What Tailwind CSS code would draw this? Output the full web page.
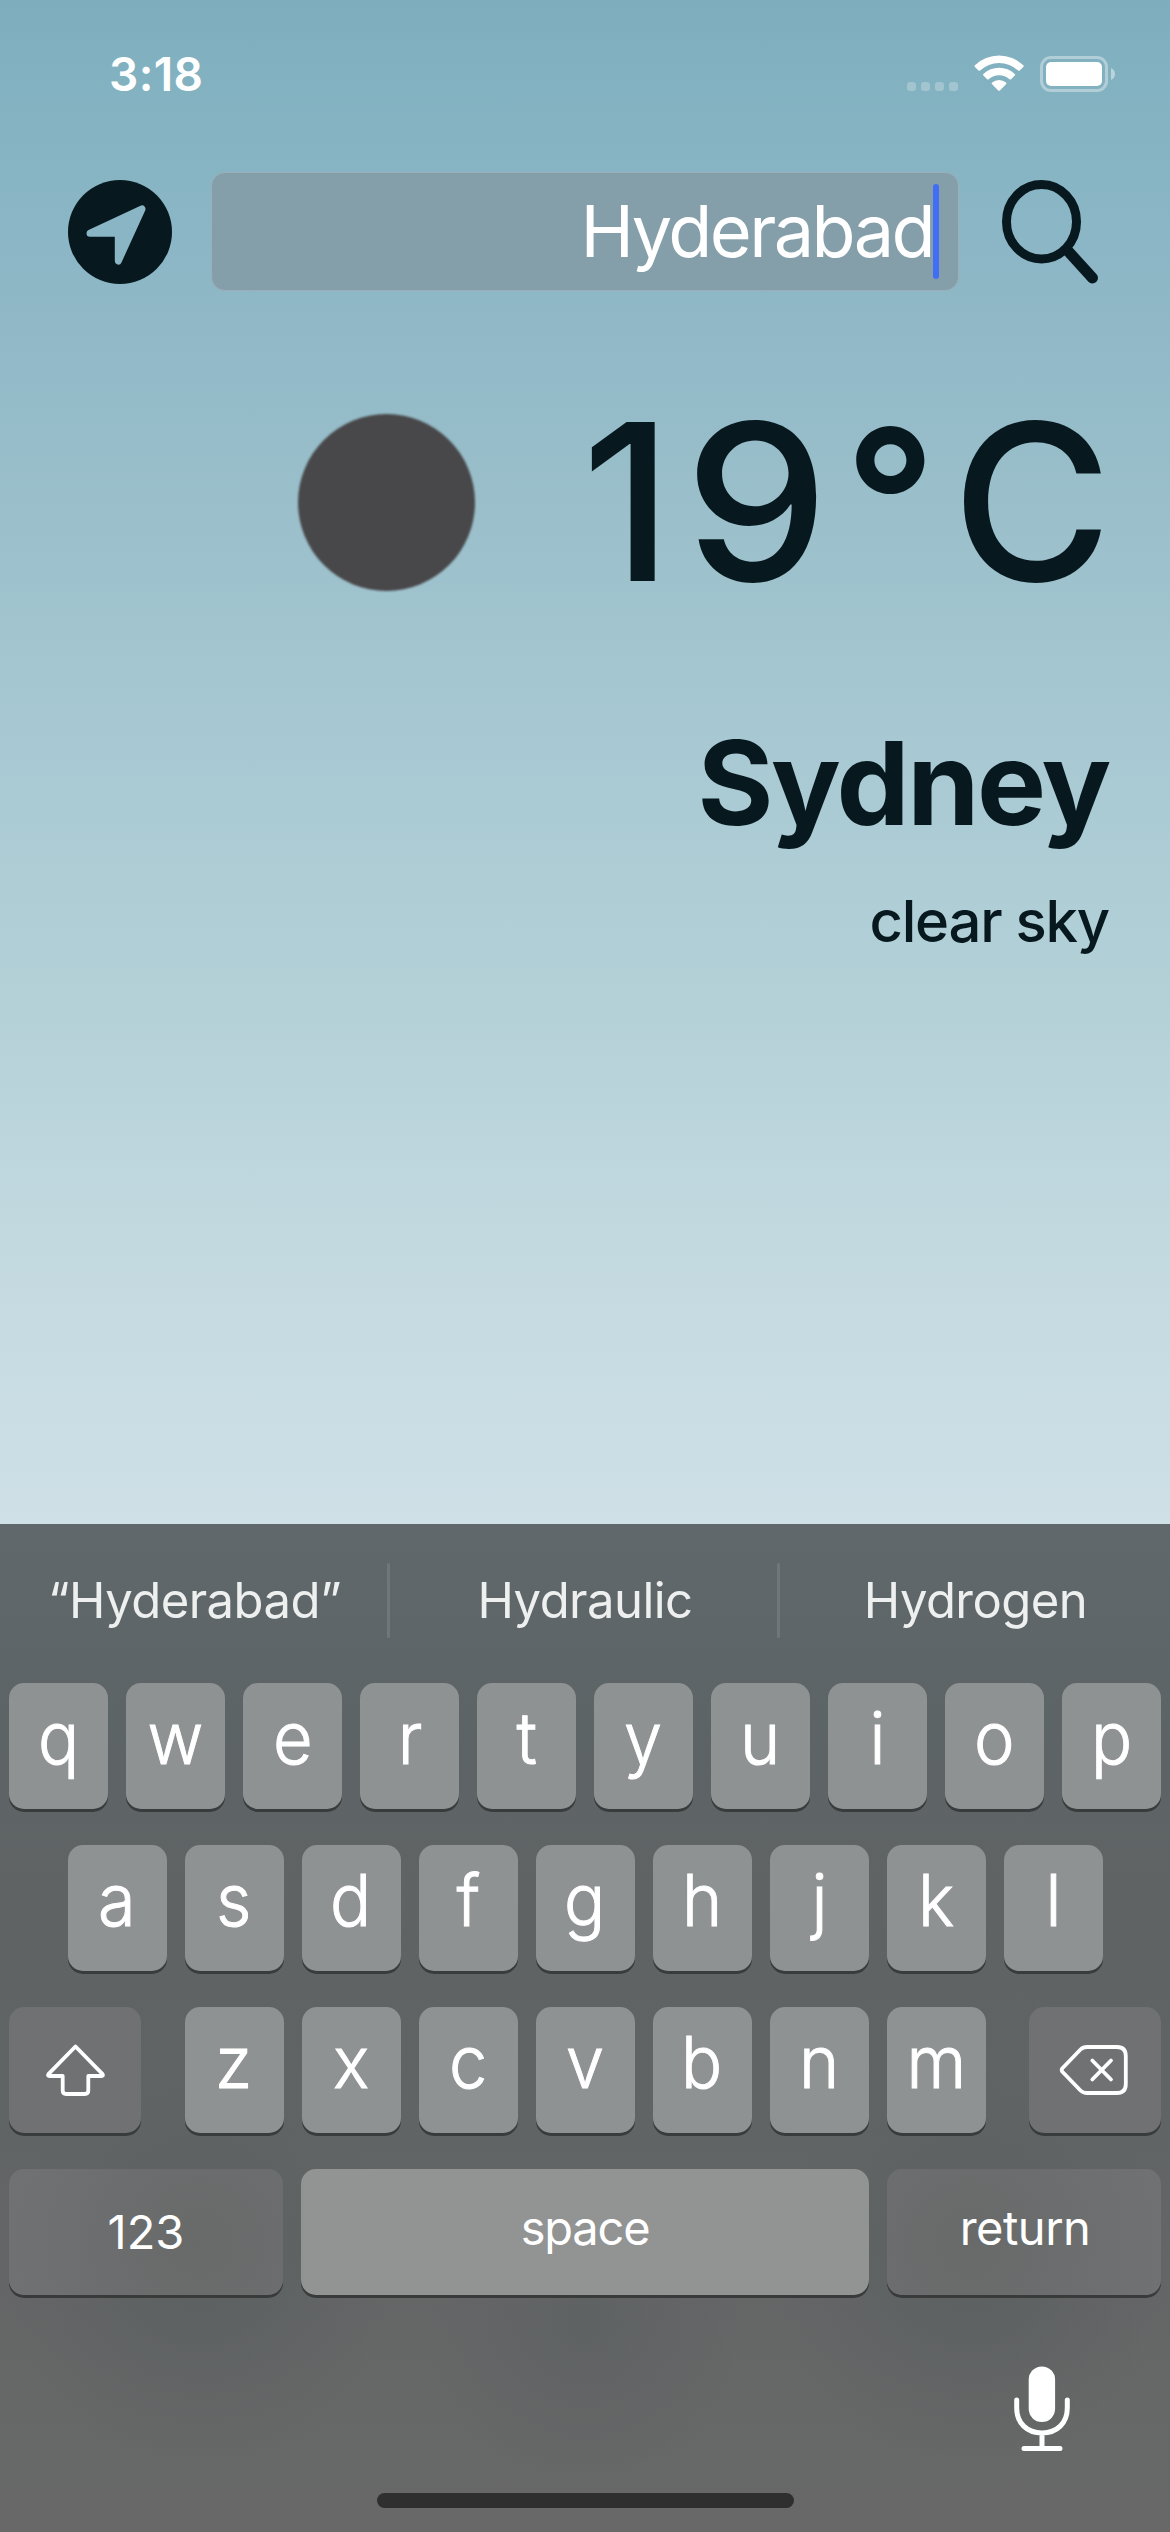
<!DOCTYPE html>
<html lang="en">
<head>
<meta charset="utf-8">
<title>Weather</title>
<script src="https://cdn.jsdelivr.net/npm/@tailwindcss/browser@4"></script>
</head>
<body class="h-[2532px] w-[1170px] overflow-hidden font-['Inter',sans-serif]">
<div class="flex h-[2532px] w-[1170px] flex-col bg-[linear-gradient(180deg,#7eaebe_0px,#86b4c3_150px,#90b8c7_320px,#9bc0cb_520px,#a8c9d3_750px,#b3d0d7_980px,#c3d9e0_1250px,#cfe0e7_1524px)]">

  <!-- Status bar -->
  <header class="flex h-[149px] shrink-0 justify-between pl-[109px] pr-[54px]">
    <div class="h-[149px] text-[46px] leading-[149px] font-semibold tracking-[0.4px] text-white">3:18</div>
    <div class="flex pt-[54px]">
      <div class="mt-[28px] flex h-[9px] gap-[5px]">
        <i class="size-[9px] rounded-[3px] bg-white/25"></i>
        <i class="size-[9px] rounded-[3px] bg-white/25"></i>
        <i class="size-[9px] rounded-[3px] bg-white/25"></i>
        <i class="size-[9px] rounded-[3px] bg-white/25"></i>
      </div>
      <svg class="ml-[16px] h-[38px] w-[50px]" viewBox="974 54 50 38" fill="#fff">
        <path d="M974.9 65.3a1.1 1.1 0 0 0 0 1.6l3.6 3.6a1.2 1.2 0 0 0 1.6 0a27.6 27.6 0 0 1 38 0a1.2 1.2 0 0 0 1.6 0l3.6-3.6a1.1 1.1 0 0 0 0-1.6a35 35 0 0 0-48.400 0Z"/>
        <path d="M983.4 73.900a1.100 1.100 0 0 0 0 1.600l3.700 3.700a1.200 1.200 0 0 0 1.600 0a15.400 15.400 0 0 1 20.800 0a1.200 1.200 0 0 0 1.600 0l3.700-3.700a1.100 1.100 0 0 0 0-1.600a22.900 22.900 0 0 0-31.400 0Z"/>
        <path d="M992.100 82.500a1.100 1.100 0 0 0 0 1.700l6.100 6.200a1.200 1.200 0 0 0 1.700 0l6.100-6.200a1.100 1.100 0 0 0 0-1.700a10.800 10.800 0 0 0-13.900 0Z"/>
      </svg>
      <svg class="ml-[16px] h-[38px] w-[76px]" viewBox="1040 54 76 38">
        <rect x="1041.500" y="57.500" width="65" height="33" rx="9.500" fill="none" stroke="#fff" stroke-opacity=".38" stroke-width="3"/>
        <rect x="1046" y="62" width="56" height="24" rx="5" fill="#fff"/>
        <path d="M1111 68v12c2.400-1 4-3.300 4-6s-1.600-5-4-6Z" fill="#fff" fill-opacity=".45"/>
      </svg>
    </div>
  </header>

  <!-- Search row -->
  <section class="flex h-[165px] shrink-0 items-center pt-0 pl-[68px]">
    <svg class="size-[104px] shrink-0" viewBox="68 180 104 104">
      <circle cx="120" cy="232" r="52" fill="#07181e"/>
      <path d="M90 233.200L142 209L118.300 261V236.500Q118.300 233.200 115 233.200Z" fill="#89b5c4" stroke="#89b5c4" stroke-width="7" stroke-linejoin="round"/>
    </svg>
    <div class="ml-[39px] flex h-[119px] w-[748px] items-center justify-end rounded-[14px] border border-[#9aafb8] bg-[#849faa] pr-[19px]">
      <span class="h-[119px] text-[72px] leading-[117px] font-normal tracking-[-2.6px] text-white">Hyderabad</span>
      <span class="h-[95px] w-[6px] rounded-[3px] bg-[#416ef5]"></span>
    </div>
    <svg class="ml-[42px] h-[104px] w-[98px]" viewBox="1001 180 98 104" fill="none" stroke="#07181e">
      <ellipse cx="1041.500" cy="221.700" rx="35" ry="37.200" stroke-width="9"/>
      <path d="M1068 251L1092.500 278" stroke-width="11" stroke-linecap="round"/>
    </svg>
  </section>

  <!-- Current conditions -->
  <section class="flex shrink-0 flex-col items-end pr-[61px] text-[#07181e]">
    <div class="-mr-[3px] flex h-[376px] items-center justify-end">
      <div class="mr-[107px] size-[177px] rounded-full bg-[#484749] blur-[0.8px]"></div>
      <div class="flex text-[218px] leading-[376px] font-medium">
        <span class="mr-[16px]">1</span><span class="mr-[19px] scale-x-105">9</span><span class="mr-[16px] h-[376px] -translate-y-[2px] text-[200px] font-semibold">°</span><span>C</span>
      </div>
    </div>
    <h1 class="h-[186px] text-[116px] leading-[186px] font-bold tracking-[-2.400px]">Sydney</h1>
    <p class="h-[90px] text-[58px] leading-[90px] font-medium tracking-[-1.250px]">clear sky</p>
  </section>

  <!-- Keyboard -->
  <section class="mt-auto flex h-[1008px] shrink-0 flex-col bg-[radial-gradient(circle_at_200px_740px,#5c6061_0px,#5c606100_200px),radial-gradient(circle_at_970px_740px,#5c6061_0px,#5c606100_200px),radial-gradient(circle_at_585px_800px,#5f6263_0px,#5f626300_160px),linear-gradient(180deg,#61686b_0px,#5d6466_200px,#606364_420px,#616465_600px,#666767_850px,#686868_1008px)] text-white">
    <div class="mt-[39px] flex h-[75px] shrink-0 text-[49px] leading-[75px] tracking-[-0.550px] text-[#eef0f0]">
      <div class="w-[387px] pl-[2px] text-center">“Hyderabad”</div>
      <i class="h-[75px] w-[3px] rounded-full bg-[#717779]"></i>
      <div class="w-[387px] pl-[3px] text-center">Hydraulic</div>
      <i class="h-[75px] w-[3px] rounded-full bg-[#717779]"></i>
      <div class="w-[390px] pl-[1px] text-center">Hydrogen</div>
    </div>

    <div id="keys" class="mt-[45px] flex flex-col gap-[36px] px-[9px]">
      <div data-row="qwertyuiop" class="flex justify-center gap-[18px]"></div>
      <div data-row="asdfghjkl" class="flex justify-center gap-[18px]"></div>
      <div class="flex justify-between">
        <div class="h-[126px] w-[132px] rounded-[15px] bg-[#6f7173] shadow-[0_3px_0_#393c3d]">
          <svg class="h-[126px] w-[132px]" viewBox="9 2007 132 126" fill="none" stroke="#fff" stroke-width="3.800" stroke-linejoin="round">
            <path d="M75.500 2046.500L48.400 2074.200Q47.300 2076 49.500 2076H62.700V2090.500Q62.700 2094 66.200 2094H84.800Q88.300 2094 88.300 2090.500V2076H101.500Q103.700 2076 102.600 2074.200Z"/>
          </svg>
        </div>
        <div data-row="zxcvbnm" class="flex gap-[18px]"></div>
        <div class="h-[126px] w-[132px] rounded-[15px] bg-[#6f7173] shadow-[0_3px_0_#393c3d]">
          <svg class="h-[126px] w-[132px]" viewBox="1029 2007 132 126" fill="none" stroke="#fff" stroke-width="3.800" stroke-linejoin="round" stroke-linecap="round">
            <path d="M1062.400 2068.200Q1061 2070 1062.400 2071.800L1080.500 2090.500Q1083 2093 1087 2093H1117Q1125.800 2093 1125.800 2084V2056Q1125.800 2047 1117 2047H1087Q1083 2047 1080.500 2049.500Z"/>
            <path d="M1092.300 2060.500L1111 2079.500M1111 2060.500L1092.300 2079.500"/>
          </svg>
        </div>
      </div>
      <div class="flex gap-[18px] text-[47px]">
        <div class="h-[126px] w-[274px] rounded-[15px] bg-[radial-gradient(circle_at_191px_75px,#686a6a_0px,#707172_190px)] text-center leading-[126px] shadow-[0_3px_0_#393b3b]">123</div>
        <div class="h-[126px] w-[568px] rounded-[15px] bg-[#929393] text-center leading-[118px] tracking-[-1.200px] shadow-[0_3px_0_#393b3b]">space</div>
        <div class="h-[126px] w-[274px] rounded-[15px] bg-[radial-gradient(circle_at_83px_75px,#686a6a_0px,#707172_190px)] pl-[2px] text-center leading-[118px] tracking-[-0.500px] shadow-[0_3px_0_#393b3b]">return</div>
      </div>
    </div>

    <div class="mt-[71px] flex h-[86px] justify-end pr-[99px]">
      <svg class="h-[86px] w-[58px]" viewBox="1013 2366 58 86" fill="none" stroke="#fff" stroke-width="5" stroke-linecap="round">
        <rect x="1028.700" y="2366.500" width="26.400" height="55.500" rx="13.200" fill="#fff" stroke="none"/>
        <path d="M1016.700 2400V2408C1016.700 2423 1027 2433 1042 2433S1067.300 2423 1067.300 2408V2400M1042 2433V2447M1024 2448.500H1060"/>
      </svg>
    </div>
    <div class="mt-[41px] h-[15px] w-[417px] self-center rounded-full bg-[#2f2f2f]"></div>
  </section>
</div>
<script>
  document.querySelectorAll('[data-row]').forEach(function (row) {
    row.innerHTML = row.dataset.row.split('').map(function (c) {
      return '<div class="h-[126px] w-[99px] rounded-[15px] bg-[#8f9293] text-center text-[72px] leading-[110px] font-light shadow-[0_3px_0_#393c3d]"><span class="inline-block scale-x-95 [-webkit-text-stroke:1px_white]">' + c + '</span></div>';
    }).join('');
  });
</script>
</body>
</html>
